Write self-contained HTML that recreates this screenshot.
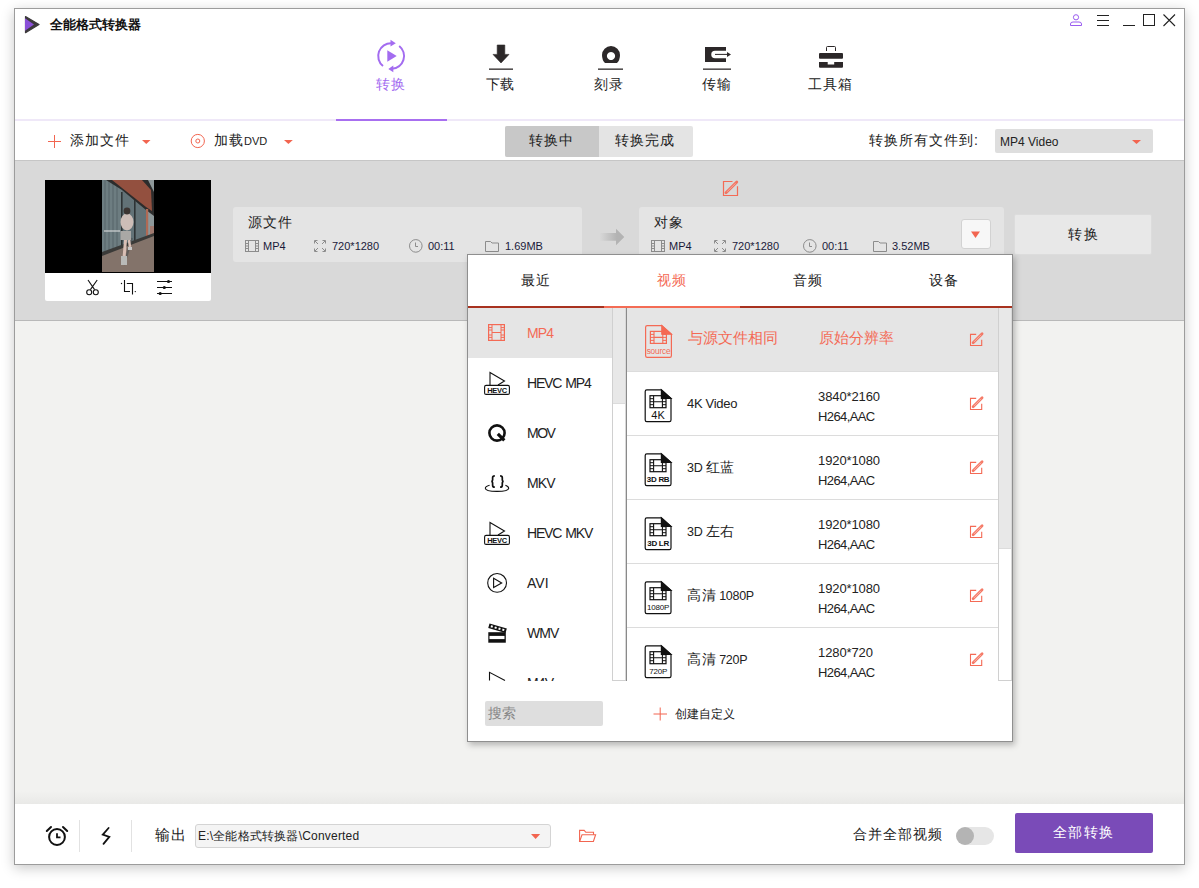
<!DOCTYPE html>
<html><head><meta charset="utf-8">
<style>
*{box-sizing:border-box;margin:0;padding:0}
html,body{width:1199px;height:888px;overflow:hidden;background:#fff;font-family:"Liberation Sans",sans-serif;color:#222}
.a{position:absolute}
#win{position:absolute;left:14px;top:8px;width:1171px;height:857px;border:1px solid #9c9c9c;background:#fff;box-shadow:0 3px 12px rgba(0,0,0,0.22);overflow:hidden}
.t{position:absolute;white-space:nowrap;line-height:1}
</style></head><body>
<div id="win"></div>
<!-- header -->
<div class="a" style="left:15px;top:9px;width:1169px;height:111px;background:#fff"></div>
<div class="a" style="left:15px;top:119px;width:1169px;height:2px;background:#efe8f8"></div>
<div class="a" style="left:336px;top:119px;width:111px;height:2px;background:#a86ff0"></div>

<!-- logo -->
<svg class="a" style="left:0;top:0" width="1199" height="120">
<polygon points="25.5,16.5 39,24.6 25.5,32.7" fill="#3d3a3c" stroke="#3d3a3c" stroke-width="1.2" stroke-linejoin="round"/>
<polygon points="25,18.3 34,24.6 25,30.8" fill="#8a50d8"/>
<!-- window controls -->
<circle cx="1076" cy="17.3" r="2.6" fill="none" stroke="#9a5cf0" stroke-width="1"/>
<path d="M1070.5 25.5 V24 Q1070.5 22 1073 22 H1079 Q1081.5 22 1081.5 24 V25.5 Z" fill="none" stroke="#9a5cf0" stroke-width="1"/>
<path d="M1097 15.5 H1109 M1097 20.5 H1109 M1097 25.5 H1109" stroke="#222" stroke-width="1"/>
<path d="M1123 25.5 H1135" stroke="#222" stroke-width="1"/>
<rect x="1143.5" y="14.5" width="11" height="11" fill="none" stroke="#222" stroke-width="1"/>
<path d="M1163.5 14.5 L1175 26 M1175 14.5 L1163.5 26" stroke="#222" stroke-width="1.1"/>
<!-- nav: convert -->
<g fill="none" stroke="#a36cf0" stroke-width="2">
<path d="M383 66 A12.8 12.8 0 0 1 391.5 43.2"/>
<path d="M399.2 46 A12.8 12.8 0 0 1 392 68.8"/>
</g>
<path d="M390.5 39.8 L395.8 43.2 L390.5 46.6 Z" fill="#a36cf0"/>
<path d="M393.3 65.5 L388.3 68.9 L393.3 72.3 Z" fill="#a36cf0"/>
<path d="M387.3 50.3 L396.7 56 L387.3 61.7 Z" fill="#a36cf0"/>
<!-- nav: download -->
<path d="M497.2 45 H504.8 V54.4 H509 L501 63 L493 54.4 H497.2 Z" fill="#2c2829" stroke="#2c2829" stroke-width="0.6" stroke-linejoin="round"/>
<rect x="489" y="68.5" width="24" height="1.3" fill="#2c2829"/>
<!-- nav: burn -->
<path d="M602 55 A9 9 0 0 1 620 55 Q620 60 617 63 H605 Q602 60 602 55 Z M611 51.9 A4.1 4.1 0 1 0 611.01 51.9 Z" fill="#2c2829" fill-rule="evenodd"/>
<rect x="598" y="68.5" width="25" height="1.3" fill="#2c2829"/>
<!-- nav: transfer -->
<path d="M705 47 H726 V50.8 H715 A3.75 3.75 0 0 0 715 58.3 H726 V62 H705 Z" fill="#2c2829"/>
<path d="M715 54.4 H728" stroke="#2c2829" stroke-width="1"/>
<path d="M727 52 L731 54.4 L727 57 Z" fill="#2c2829"/>
<rect x="703" y="68.5" width="28" height="1.3" fill="#2c2829"/>
<!-- nav: toolbox -->
<path d="M826.5 51 V47.5 Q826.5 46.5 827.5 46.5 H834.5 Q835.5 46.5 835.5 47.5 V51" fill="none" stroke="#2c2829" stroke-width="1"/>
<rect x="819" y="53" width="24" height="5.8" rx="1" fill="#2c2829"/>
<path d="M819 62 H827.7 V64.4 H834.2 V62 H843 V66.7 Q843 67.7 842 67.7 H820 Q819 67.7 819 66.7 Z" fill="#2c2829"/>
</svg>
<div class="t" style="left:50px;top:18px;font-size:13px;font-weight:bold;color:#111">全能格式转换器</div>
<div class="t" style="left:376px;top:77px;font-size:14px;color:#a36cf0;letter-spacing:0.5px">转换</div>
<div class="t" style="left:486px;top:77px;font-size:14px;color:#222">下载</div>
<div class="t" style="left:594px;top:77px;font-size:14px;color:#222;letter-spacing:1px">刻录</div>
<div class="t" style="left:702px;top:77px;font-size:14px;color:#222;letter-spacing:1px">传输</div>
<div class="t" style="left:808px;top:77px;font-size:14px;color:#222;letter-spacing:1px">工具箱</div>
<!-- toolbar -->
<svg class="a" style="left:0;top:120px" width="1199" height="40">
<path d="M48 21.5 H61 M54.5 15 V28" stroke="#f26550" stroke-width="1"/>
<path d="M142 20 H150.5 L146.25 24 Z" fill="#f26550"/>
<circle cx="197.8" cy="21" r="6.6" fill="none" stroke="#f26550" stroke-width="1"/>
<circle cx="197.8" cy="21" r="2" fill="none" stroke="#f26550" stroke-width="1"/>
<path d="M284 20 H292.8 L288.4 24 Z" fill="#f26550"/>
<path d="M1132 20 H1141 L1136.5 24 Z" fill="#f26550"/>
</svg>
<div class="t" style="left:70px;top:133px;font-size:14px;color:#222;letter-spacing:1px">添加文件</div>
<div class="t" style="left:214px;top:133px;font-size:14px;color:#222;letter-spacing:1px">加载<span style="font-size:11px;letter-spacing:0">DVD</span></div>
<div class="a" style="left:505px;top:126px;width:188px;height:31px;border-radius:2px;background:#e4e4e4;overflow:hidden"><div class="a" style="left:0;top:0;width:94px;height:31px;background:#c8c8c8"></div></div>
<div class="t" style="left:529px;top:133px;font-size:14px;color:#222;letter-spacing:1.2px">转换中</div>
<div class="t" style="left:615px;top:133px;font-size:14px;color:#222;letter-spacing:1px">转换完成</div>
<div class="t" style="left:869px;top:133px;font-size:14px;color:#222;letter-spacing:1px">转换所有文件到<span style="letter-spacing:0">:</span></div>
<div class="a" style="left:995px;top:129px;width:158px;height:24px;border-radius:2px;background:#dedede"></div>
<div class="t" style="left:1000px;top:136px;font-size:12px;color:#222">MP4 Video</div>
<svg class="a" style="left:0;top:120px" width="1199" height="40"><path d="M1132 20 H1141 L1136.5 24 Z" fill="#f26550"/></svg>

<div class="a" style="left:15px;top:160px;width:1169px;height:1px;background:#c6c6c6"></div>
<!-- file area -->
<div class="a" style="left:15px;top:161px;width:1169px;height:159px;background:#d9d9d9"></div>
<div class="a" style="left:15px;top:320px;width:1169px;height:1px;background:#b9b9b9"></div>

<!-- thumbnail -->
<div class="a" style="left:45px;top:180px;width:166px;height:121px;background:#fff;border-radius:0 0 2px 2px"></div>
<div class="a" style="left:45px;top:180px;width:166px;height:93px;background:#000"></div>
<svg class="a" style="left:102px;top:180px" width="52" height="92" viewBox="0 0 52 92">
<rect width="52" height="92" fill="#627277"/>
<rect x="0" y="0" width="20" height="80" fill="#6d7d81"/>
<path d="M3 0 V78 M7 0 V77 M11 0 V76 M15 0 V75" stroke="#566468" stroke-width="1"/>
<rect x="45" y="0" width="7" height="60" fill="#8d9799"/>
<polygon points="4,0 46,0 52,12 52,36 44,30 20,10" fill="#2c2c2c"/>
<polygon points="10,0 40,0 49,10 50,31 44,27" fill="#93503f"/>
<rect x="19" y="12" width="1.6" height="66" fill="#2e3436"/>
<rect x="32" y="20" width="1.6" height="56" fill="#2e3436"/>
<rect x="44" y="29" width="2.2" height="30" fill="#b06a55"/>
<rect x="48" y="46" width="4" height="10" fill="#a07a70"/>
<polygon points="0,74 52,55 52,92 0,92" fill="#83736a"/>
<polygon points="0,72 52,53 52,56 0,76" fill="#3a3a38"/>
<path d="M30 58 L22 85" stroke="#4a4e50" stroke-width="2" opacity="0.6"/>
<ellipse cx="25" cy="42" rx="6.5" ry="8.5" fill="#cdbdb7"/>
<circle cx="25" cy="31" r="3.4" fill="#3c3532"/>
<rect x="18.5" y="51" width="10.5" height="9" fill="#a9a8a5"/>
<path d="M23.5 60 L22 78" stroke="#d9bfb5" stroke-width="3"/>
<path d="M27 60 L28 67" stroke="#d9bfb5" stroke-width="2.5"/>
<rect x="19" y="76" width="6" height="9" fill="#b9bab8"/>
<rect x="26" y="67" width="4" height="3" fill="#c8c8c8"/>
<rect x="2" y="50" width="16" height="2" fill="#e8e8e8" opacity="0.5"/>
</svg>
<svg class="a" style="left:0;top:270px" width="220" height="40">
<g fill="none" stroke="#111" stroke-width="1.1">
<path d="M88 10 L94.6 19.6 M97.2 10 L90.4 19.6"/>
<circle cx="89.2" cy="22.2" r="2.5"/><circle cx="95.8" cy="22.2" r="2.5"/>
<path d="M124.5 10 V21.5 H130 M126.8 13.5 H132.5 V24.5"/>
<path d="M157 11.5 H172 M157 17.5 H172 M157 23.5 H172"/>
</g>
<g fill="#111"><circle cx="121.5" cy="13.5" r="0.7"/><circle cx="135.3" cy="21.6" r="0.7"/>
<circle cx="168.5" cy="11.5" r="1.6"/><circle cx="164.3" cy="17.5" r="1.6"/><circle cx="160.2" cy="23.5" r="1.6"/></g>
</svg>
<!-- source card -->
<div class="a" style="left:233px;top:207px;width:349px;height:55px;background:#e4e4e4;border-radius:3px"></div>
<div class="t" style="left:248px;top:215px;font-size:14px;color:#222;letter-spacing:1px">源文件</div>
<!-- target card -->
<div class="a" style="left:639px;top:207px;width:365px;height:55px;background:#e4e4e4;border-radius:3px"></div>
<div class="t" style="left:654px;top:215px;font-size:14px;color:#222;letter-spacing:1px">对象</div>
<div class="a" style="left:961px;top:219px;width:30px;height:30px;background:#f7f7f7;border:1px solid #d2d2d2;border-radius:3px"></div>
<div class="a" style="left:1014px;top:214px;width:138px;height:41px;background:#e8e8e8;border:1px solid #dcdcdc;border-radius:2px"></div>
<div class="t" style="left:1068px;top:227px;font-size:14px;color:#222;letter-spacing:1.5px">转换</div>
<svg class="a" style="left:0;top:170px" width="1199" height="100">
<path d="M971 61.6 H980 L975.5 67.9 Z" fill="#f26550"/>
<path d="M732.5 11.5 H723.5 V25.5 H737.5 V16.3" fill="none" stroke="#f46a55" stroke-width="1.2"/>
<path d="M726 22.8 L736.8 12" stroke="#f46a55" stroke-width="2.8" stroke-linecap="round" opacity="0.9"/><path d="M727 21.8 L735.5 13.3" stroke="#fff" stroke-width="0.7" opacity="0.55"/>
<!-- arrow -->
<defs><linearGradient id="ag" x1="0" x2="1"><stop offset="0" stop-color="#b3b3b3" stop-opacity="0"/><stop offset="0.7" stop-color="#b3b3b3"/></linearGradient></defs><path d="M599.5 63.1 H616 V58.7 L624.3 67 L616 75.2 V70.8 H599.5 Z" fill="url(#ag)"/>
<!-- info icons src -->
<g fill="none" stroke="#8c8c8c" stroke-width="1">
<rect x="245.5" y="70.5" width="13" height="11"/><path d="M248.5 70.5 V81.5 M255.5 70.5 V81.5 M245.5 73.5 H248.5 M245.5 76 H248.5 M245.5 78.5 H248.5 M255.5 73.5 H258.5 M255.5 76 H258.5 M255.5 78.5 H258.5"/>
<path d="M314.5 73.5 V70.5 H317.5 M322.5 70.5 H325.5 V73.5 M325.5 78.5 V81.5 H322.5 M317.5 81.5 H314.5 V78.5 M315 71 L318 74 M325 71 L322 74 M325 81 L322 78 M315 81 L318 78"/>
<circle cx="415.8" cy="75.9" r="6.3"/><path d="M415.5 72.5 V76.5 H418"/>
<path d="M485.5 81.5 V71.5 H490.5 L492 73 H498.5 V81.5 Z"/>
<rect x="651.5" y="70.5" width="13" height="11"/><path d="M654.5 70.5 V81.5 M661.5 70.5 V81.5 M651.5 73.5 H654.5 M651.5 76 H654.5 M651.5 78.5 H654.5 M661.5 73.5 H664.5 M661.5 76 H664.5 M661.5 78.5 H664.5"/>
<path d="M714.5 73.5 V70.5 H717.5 M722.5 70.5 H725.5 V73.5 M725.5 78.5 V81.5 H722.5 M717.5 81.5 H714.5 V78.5 M715 71 L718 74 M725 71 L722 74 M725 81 L722 78 M715 81 L718 78"/>
<circle cx="809.8" cy="75.9" r="6.3"/><path d="M809.5 72.5 V76.5 H812"/>
<path d="M873.5 81.5 V71.5 H878.5 L880 73 H886.5 V81.5 Z"/>
</g>
</svg>
<div class="t" style="left:263px;top:241px;font-size:11px;color:#1a1a3a">MP4</div>
<div class="t" style="left:332px;top:241px;font-size:11px;color:#1a1a3a">720*1280</div>
<div class="t" style="left:428px;top:241px;font-size:11px;color:#1a1a3a">00:11</div>
<div class="t" style="left:505px;top:241px;font-size:11px;color:#1a1a3a">1.69MB</div>
<div class="t" style="left:669px;top:241px;font-size:11px;color:#1a1a3a">MP4</div>
<div class="t" style="left:732px;top:241px;font-size:11px;color:#1a1a3a">720*1280</div>
<div class="t" style="left:822px;top:241px;font-size:11px;color:#1a1a3a">00:11</div>
<div class="t" style="left:892px;top:241px;font-size:11px;color:#1a1a3a">3.52MB</div>
<!-- main area -->
<div class="a" style="left:15px;top:321px;width:1169px;height:483px;background:linear-gradient(#f2f2f0 0,#f2f2f0 470px,#e9e9e7 483px)"></div>
<!-- footer -->
<div class="a" style="left:15px;top:804px;width:1169px;height:60px;background:#fff"></div>


<!-- footer content -->
<svg class="a" style="left:0;top:800px" width="1199" height="70">
<g fill="none" stroke="#111" stroke-width="2" stroke-linecap="round">
<circle cx="57" cy="37" r="7.9"/>
<path d="M46.8 31 L51 27 M67.2 31 L63 27"/>
<path d="M57 33.2 V37.3 H60.5" stroke-width="1.8" stroke-linecap="butt"/>
<path d="M108.6 28 L102.8 34.6 L109.3 36.9 L103.5 43.8" stroke-width="1.8" stroke-linejoin="miter"/>
</g>
<rect x="79" y="20" width="1" height="32" fill="#e2e2e2"/>
<rect x="131" y="20" width="1" height="32" fill="#e2e2e2"/>
<path d="M531 34 H540.2 L535.6 39 Z" fill="#f26550"/>
<g fill="none" stroke="#f26550" stroke-width="1.1">
<path d="M579.6 41.5 V30.4 H584.2 L585.8 32.3 H593.5 V34.7"/>
<path d="M579.6 41.5 L582 34.7 H595.6 L593.4 41.5 Z"/>
</g>
</svg>
<div class="t" style="left:155px;top:828px;font-size:14.5px;color:#222;letter-spacing:1.2px">输出</div>
<div class="a" style="left:195px;top:824px;width:356px;height:24px;background:#f4f4f4;border:1px solid #d4d4d4;border-radius:3px"></div>
<div class="t" style="left:198px;top:830px;font-size:12px;color:#222;letter-spacing:0.2px">E:\全能格式转换器\Converted</div>
<svg class="a" style="left:0;top:800px" width="1199" height="70"><path d="M531 34 H540.2 L535.6 39 Z" fill="#f26550"/></svg>
<div class="t" style="left:853px;top:827px;font-size:14px;color:#222;letter-spacing:1px">合并全部视频</div>
<div class="a" style="left:957px;top:827px;width:37px;height:18px;background:#e6e6e6;border-radius:9px"></div>
<div class="a" style="left:956px;top:827px;width:18px;height:18px;background:#b4b4b4;border-radius:50%"></div>
<div class="a" style="left:1015px;top:813px;width:138px;height:40px;background:#7a4bb8;border-radius:2px"></div>
<div class="t" style="left:1053px;top:825px;font-size:14px;color:#fff;letter-spacing:1.3px">全部转换</div>
<!-- popup -->
<div class="a" style="left:467px;top:254px;width:546px;height:488px;background:#fff;border:1px solid #8f8f8f;box-shadow:2px 3px 6px rgba(0,0,0,0.25)"></div>
<div class="t" style="left:521px;top:273px;letter-spacing:1px;font-size:14px;color:#222">最近</div>
<div class="t" style="left:657px;top:273px;letter-spacing:1px;font-size:14px;color:#f46a55">视频</div>
<div class="t" style="left:793px;top:273px;letter-spacing:1px;font-size:14px;color:#222">音频</div>
<div class="t" style="left:929px;top:273px;letter-spacing:1px;font-size:14px;color:#222">设备</div>
<div class="a" style="left:468px;top:306px;width:544px;height:2px;background:#a8321f"></div>
<div class="a" style="left:604px;top:306px;width:136px;height:2px;background:#f46c55"></div>
<!-- left list -->
<div class="a" style="left:468px;top:308px;width:144px;height:50px;background:#e5e5e5"></div>
<div class="a" style="left:612px;top:308px;width:1px;height:373px;background:#d0d0d0"></div>
<div class="a" style="left:613px;top:308px;width:12px;height:95px;background:#e8e8e8"></div>
<div class="a" style="left:625px;top:308px;width:1px;height:372px;background:#d8d8d8"></div>
<div class="a" style="left:613px;top:403px;width:12px;height:1px;background:#dcdcdc"></div>
<div class="a" style="left:612px;top:680px;width:14px;height:1px;background:#d0d0d0"></div>
<div class="a" style="left:626px;top:308px;width:1px;height:373px;background:#8a8a8a"></div>
<!-- right list -->
<div class="a" style="left:627px;top:308px;width:371px;height:63px;background:#e5e5e5"></div>
<div class="a" style="left:627px;top:371px;width:371px;height:1px;background:#dcdcdc"></div>
<div class="a" style="left:627px;top:435px;width:371px;height:1px;background:#dcdcdc"></div>
<div class="a" style="left:627px;top:499px;width:371px;height:1px;background:#dcdcdc"></div>
<div class="a" style="left:627px;top:563px;width:371px;height:1px;background:#dcdcdc"></div>
<div class="a" style="left:627px;top:627px;width:371px;height:1px;background:#dcdcdc"></div>
<div class="a" style="left:998px;top:308px;width:1px;height:373px;background:#d0d0d0"></div>
<div class="a" style="left:999px;top:308px;width:12px;height:240px;background:#e8e8e8"></div>
<div class="a" style="left:999px;top:548px;width:12px;height:1px;background:#dcdcdc"></div>
<div class="a" style="left:1011px;top:308px;width:1px;height:372px;background:#d8d8d8"></div>
<div class="a" style="left:998px;top:680px;width:14px;height:1px;background:#d0d0d0"></div>
<div class="t" style="left:688px;top:330px;font-size:15px;color:#f46a55">与源文件相同</div>
<div class="t" style="left:819px;top:331px;font-size:14.5px;color:#f46a55">原始分辨率</div>
<div class="t" style="left:687px;top:397px;font-size:13px;color:#222;letter-spacing:-0.3px">4K Video</div>
<div class="t" style="left:818px;top:390px;font-size:13px;color:#222;letter-spacing:-0.1px">3840*2160</div>
<div class="t" style="left:818px;top:410px;font-size:13px;color:#222;letter-spacing:-0.6px">H264,AAC</div>
<div class="t" style="left:687px;top:460px;font-size:12.5px;color:#222;letter-spacing:-0.3px">3D <span style="font-size:14px;letter-spacing:0.5px">红蓝</span></div>
<div class="t" style="left:818px;top:454px;font-size:13px;color:#222;letter-spacing:-0.1px">1920*1080</div>
<div class="t" style="left:818px;top:474px;font-size:13px;color:#222;letter-spacing:-0.6px">H264,AAC</div>
<div class="t" style="left:687px;top:524px;font-size:12.5px;color:#222;letter-spacing:-0.3px">3D <span style="font-size:14px;letter-spacing:0.5px">左右</span></div>
<div class="t" style="left:818px;top:518px;font-size:13px;color:#222;letter-spacing:-0.1px">1920*1080</div>
<div class="t" style="left:818px;top:538px;font-size:13px;color:#222;letter-spacing:-0.6px">H264,AAC</div>
<div class="t" style="left:687px;top:588px;font-size:12.5px;color:#222;letter-spacing:-0.3px"><span style="font-size:14px;letter-spacing:0.5px">高清</span> 1080P</div>
<div class="t" style="left:818px;top:582px;font-size:13px;color:#222;letter-spacing:-0.1px">1920*1080</div>
<div class="t" style="left:818px;top:602px;font-size:13px;color:#222;letter-spacing:-0.6px">H264,AAC</div>
<div class="t" style="left:687px;top:652px;font-size:12.5px;color:#222;letter-spacing:-0.3px"><span style="font-size:14px;letter-spacing:0.5px">高清</span> 720P</div>
<div class="t" style="left:818px;top:646px;font-size:13px;color:#222;letter-spacing:-0.1px">1280*720</div>
<div class="t" style="left:818px;top:666px;font-size:13px;color:#222;letter-spacing:-0.6px">H264,AAC</div>
<div class="t" style="left:527px;top:326px;font-size:14px;color:#f46a55;letter-spacing:-0.9px">MP4</div>
<div class="t" style="left:527px;top:376px;font-size:14px;color:#222;letter-spacing:-1.2px;word-spacing:1.5px">HEVC MP4</div>
<div class="t" style="left:527px;top:426px;font-size:14px;color:#222;letter-spacing:-1.5px">MOV</div>
<div class="t" style="left:527px;top:476px;font-size:14px;color:#222;letter-spacing:-0.9px">MKV</div>
<div class="t" style="left:527px;top:526px;font-size:14px;color:#222;letter-spacing:-1.2px;word-spacing:1.5px">HEVC MKV</div>
<div class="t" style="left:527px;top:576px;font-size:14px;color:#222;letter-spacing:0px">AVI</div>
<div class="t" style="left:527px;top:626px;font-size:14px;color:#222;letter-spacing:-0.9px">WMV</div>
<div class="t" style="left:527px;top:676px;font-size:14px;color:#222;letter-spacing:-0.9px">M4V</div>
<svg class="a" style="left:0;top:0" width="1199" height="888">
<g fill="none" stroke="#f46a55" stroke-width="1.2">
<rect x="488.6" y="324.6" width="15.8" height="15.8"/>
<path d="M492 324.6 V340.4 M501 324.6 V340.4 M492 332.5 H501 M488.6 327.6 H492 M488.6 330 H492 M488.6 335 H492 M488.6 337.4 H492 M501 327.6 H504.4 M501 330 H504.4 M501 335 H504.4 M501 337.4 H504.4" stroke-width="1"/>
</g>
<g fill="none" stroke="#111" stroke-width="1.1">
<path d="M490 385 V372.5 L504.5 381 L498 385"/>
<rect x="484.6" y="385.4" width="24.8" height="9" rx="1.5"/>
<path d="M490 535 V522.5 L504.5 531 L498 535"/>
<rect x="484.6" y="535.4" width="24.8" height="9" rx="1.5"/>
<circle cx="497" cy="433" r="7.6" stroke-width="2.6"/>
<path d="M497.8 433.8 L504.3 440.3" stroke-width="3.2"/>
<path d="M489.6 485.2 Q485.3 486.4 485.3 488.3 Q485.3 491.4 497 491.4 Q508.7 491.4 508.7 488.3 Q508.7 486.4 505.4 485.2"/>
<circle cx="497.1" cy="582.9" r="9.4"/>
<path d="M493.6 578.3 L501.7 582.9 L493.6 587.6 Z"/>
<path d="M489.5 680.5 V672.3 L505 680.5"/>
</g>
<text x="497" y="393" text-anchor="middle" font-family="Liberation Sans" font-weight="bold" font-size="7.5" fill="#111" letter-spacing="-0.3">HEVC</text>
<text x="497" y="543" text-anchor="middle" font-family="Liberation Sans" font-weight="bold" font-size="7.5" fill="#111" letter-spacing="-0.3">HEVC</text>
<path d="M494.8 475.8 Q492.6 475.8 492.6 477.8 V480 Q492.6 481.4 491.2 481.4 Q492.6 481.4 492.6 482.8 V485.2 Q492.6 487.2 494.8 487.2 M500.1 475.8 Q502.3 475.8 502.3 477.8 V480 Q502.3 481.4 503.7 481.4 Q502.3 481.4 502.3 482.8 V485.2 Q502.3 487.2 500.1 487.2" fill="none" stroke="#111" stroke-width="1.7"/>
<rect x="488.3" y="632.2" width="17.5" height="10.5" fill="#111"/>
<rect x="489.5" y="635.9" width="15" height="3.2" fill="#fff"/>
<g transform="translate(489.5,623.6) rotate(16)"><rect x="0" y="0" width="18" height="4.5" fill="#111"/>
<rect x="2" y="1.2" width="2" height="2" fill="#fff"/><rect x="6" y="1.2" width="2" height="2" fill="#fff"/><rect x="10" y="1.2" width="2" height="2" fill="#fff"/><rect x="14" y="1.2" width="2" height="2" fill="#fff"/></g>
</svg>
<svg class="a" style="left:0;top:0" width="1199" height="888"><g transform="translate(645,325)" fill="none" stroke="#f46a55" stroke-width="1.2">
<path d="M16.8 0.6 H2.2 Q0.6 0.6 0.6 2.2 V30.8 Q0.6 32.4 2.2 32.4 H24.8 Q26.4 32.4 26.4 30.8 V9.2 Z"/>
<path d="M16.8 0.6 L26.4 9.2 H16.8 Z" fill="#f46a55"/>
<rect x="5.4" y="6.4" width="16" height="12" stroke-width="1.2"/>
<path d="M9 6.4 V18.4 M17.8 6.4 V18.4 M9 12.4 H17.8" stroke-width="1.1"/>
<path d="M5.4 9.4 H9 M5.4 12.4 H9 M5.4 15.4 H9 M17.8 9.4 H21.4 M17.8 12.4 H21.4 M17.8 15.4 H21.4" stroke-width="1"/>
<text x="13.5" y="29.3" text-anchor="middle" font-family="Liberation Sans" font-size="8.3" fill="#f46a55" stroke="none" font-weight="normal" letter-spacing="-0.2">source</text>
</g><g transform="translate(976.5,339.5)" fill="none" stroke="#f46a55"><path d="M-0.3 -5.1 H-6 V6 H5.2 V0.2" stroke-width="1.1"/>
<path d="M-3.4 3.3 L5.6 -5.7" stroke-width="2.7" stroke-linecap="round" opacity="0.9"/><path d="M-2.6 2.5 L4.6 -4.7" stroke="#fff" stroke-width="0.7" opacity="0.6"/></g><g transform="translate(644.6,389.3)" fill="none" stroke="#111" stroke-width="1.2">
<path d="M16.8 0.6 H2.2 Q0.6 0.6 0.6 2.2 V30.8 Q0.6 32.4 2.2 32.4 H24.8 Q26.4 32.4 26.4 30.8 V9.2 Z"/>
<path d="M16.8 0.6 L26.4 9.2 H16.8 Z" fill="#111"/>
<rect x="5.4" y="6.4" width="16" height="12" stroke-width="1.2"/>
<path d="M9 6.4 V18.4 M17.8 6.4 V18.4 M9 12.4 H17.8" stroke-width="1.1"/>
<path d="M5.4 9.4 H9 M5.4 12.4 H9 M5.4 15.4 H9 M17.8 9.4 H21.4 M17.8 12.4 H21.4 M17.8 15.4 H21.4" stroke-width="1"/>
<text x="13.5" y="29.3" text-anchor="middle" font-family="Liberation Sans" font-size="11" fill="#111" stroke="none" font-weight="normal" letter-spacing="0">4K</text>
</g><g transform="translate(976.5,403.5)" fill="none" stroke="#f46a55"><path d="M-0.3 -5.1 H-6 V6 H5.2 V0.2" stroke-width="1.1"/>
<path d="M-3.4 3.3 L5.6 -5.7" stroke-width="2.7" stroke-linecap="round" opacity="0.9"/><path d="M-2.6 2.5 L4.6 -4.7" stroke="#fff" stroke-width="0.7" opacity="0.6"/></g><g transform="translate(644.6,453.3)" fill="none" stroke="#111" stroke-width="1.2">
<path d="M16.8 0.6 H2.2 Q0.6 0.6 0.6 2.2 V30.8 Q0.6 32.4 2.2 32.4 H24.8 Q26.4 32.4 26.4 30.8 V9.2 Z"/>
<path d="M16.8 0.6 L26.4 9.2 H16.8 Z" fill="#111"/>
<rect x="5.4" y="6.4" width="16" height="12" stroke-width="1.2"/>
<path d="M9 6.4 V18.4 M17.8 6.4 V18.4 M9 12.4 H17.8" stroke-width="1.1"/>
<path d="M5.4 9.4 H9 M5.4 12.4 H9 M5.4 15.4 H9 M17.8 9.4 H21.4 M17.8 12.4 H21.4 M17.8 15.4 H21.4" stroke-width="1"/>
<text x="13.5" y="28.5" text-anchor="middle" font-family="Liberation Sans" font-size="8" fill="#111" stroke="none" font-weight="bold" letter-spacing="-0.3">3D RB</text>
</g><g transform="translate(976.5,467.5)" fill="none" stroke="#f46a55"><path d="M-0.3 -5.1 H-6 V6 H5.2 V0.2" stroke-width="1.1"/>
<path d="M-3.4 3.3 L5.6 -5.7" stroke-width="2.7" stroke-linecap="round" opacity="0.9"/><path d="M-2.6 2.5 L4.6 -4.7" stroke="#fff" stroke-width="0.7" opacity="0.6"/></g><g transform="translate(644.6,517.3)" fill="none" stroke="#111" stroke-width="1.2">
<path d="M16.8 0.6 H2.2 Q0.6 0.6 0.6 2.2 V30.8 Q0.6 32.4 2.2 32.4 H24.8 Q26.4 32.4 26.4 30.8 V9.2 Z"/>
<path d="M16.8 0.6 L26.4 9.2 H16.8 Z" fill="#111"/>
<rect x="5.4" y="6.4" width="16" height="12" stroke-width="1.2"/>
<path d="M9 6.4 V18.4 M17.8 6.4 V18.4 M9 12.4 H17.8" stroke-width="1.1"/>
<path d="M5.4 9.4 H9 M5.4 12.4 H9 M5.4 15.4 H9 M17.8 9.4 H21.4 M17.8 12.4 H21.4 M17.8 15.4 H21.4" stroke-width="1"/>
<text x="13.5" y="28.5" text-anchor="middle" font-family="Liberation Sans" font-size="8" fill="#111" stroke="none" font-weight="bold" letter-spacing="-0.3">3D LR</text>
</g><g transform="translate(976.5,531.5)" fill="none" stroke="#f46a55"><path d="M-0.3 -5.1 H-6 V6 H5.2 V0.2" stroke-width="1.1"/>
<path d="M-3.4 3.3 L5.6 -5.7" stroke-width="2.7" stroke-linecap="round" opacity="0.9"/><path d="M-2.6 2.5 L4.6 -4.7" stroke="#fff" stroke-width="0.7" opacity="0.6"/></g><g transform="translate(644.6,581.3)" fill="none" stroke="#111" stroke-width="1.2">
<path d="M16.8 0.6 H2.2 Q0.6 0.6 0.6 2.2 V30.8 Q0.6 32.4 2.2 32.4 H24.8 Q26.4 32.4 26.4 30.8 V9.2 Z"/>
<path d="M16.8 0.6 L26.4 9.2 H16.8 Z" fill="#111"/>
<rect x="5.4" y="6.4" width="16" height="12" stroke-width="1.2"/>
<path d="M9 6.4 V18.4 M17.8 6.4 V18.4 M9 12.4 H17.8" stroke-width="1.1"/>
<path d="M5.4 9.4 H9 M5.4 12.4 H9 M5.4 15.4 H9 M17.8 9.4 H21.4 M17.8 12.4 H21.4 M17.8 15.4 H21.4" stroke-width="1"/>
<text x="13.5" y="28.7" text-anchor="middle" font-family="Liberation Sans" font-size="8" fill="#111" stroke="none" font-weight="normal" letter-spacing="-0.2">1080P</text>
</g><g transform="translate(976.5,595.5)" fill="none" stroke="#f46a55"><path d="M-0.3 -5.1 H-6 V6 H5.2 V0.2" stroke-width="1.1"/>
<path d="M-3.4 3.3 L5.6 -5.7" stroke-width="2.7" stroke-linecap="round" opacity="0.9"/><path d="M-2.6 2.5 L4.6 -4.7" stroke="#fff" stroke-width="0.7" opacity="0.6"/></g><g transform="translate(644.6,645.3)" fill="none" stroke="#111" stroke-width="1.2">
<path d="M16.8 0.6 H2.2 Q0.6 0.6 0.6 2.2 V30.8 Q0.6 32.4 2.2 32.4 H24.8 Q26.4 32.4 26.4 30.8 V9.2 Z"/>
<path d="M16.8 0.6 L26.4 9.2 H16.8 Z" fill="#111"/>
<rect x="5.4" y="6.4" width="16" height="12" stroke-width="1.2"/>
<path d="M9 6.4 V18.4 M17.8 6.4 V18.4 M9 12.4 H17.8" stroke-width="1.1"/>
<path d="M5.4 9.4 H9 M5.4 12.4 H9 M5.4 15.4 H9 M17.8 9.4 H21.4 M17.8 12.4 H21.4 M17.8 15.4 H21.4" stroke-width="1"/>
<text x="13.5" y="28.7" text-anchor="middle" font-family="Liberation Sans" font-size="8" fill="#111" stroke="none" font-weight="normal" letter-spacing="-0.2">720P</text>
</g><g transform="translate(976.5,659.5)" fill="none" stroke="#f46a55"><path d="M-0.3 -5.1 H-6 V6 H5.2 V0.2" stroke-width="1.1"/>
<path d="M-3.4 3.3 L5.6 -5.7" stroke-width="2.7" stroke-linecap="round" opacity="0.9"/><path d="M-2.6 2.5 L4.6 -4.7" stroke="#fff" stroke-width="0.7" opacity="0.6"/></g></svg><!-- popup bottom -->
<div class="a" style="left:468px;top:681px;width:544px;height:60px;background:#fff"></div>
<div class="a" style="left:485px;top:701px;width:118px;height:25px;background:#dedede;border-radius:2px"></div>
<div class="t" style="left:488px;top:706px;font-size:14px;color:#888">搜索</div>
<svg class="a" style="left:0;top:0" width="1199" height="888"><path d="M653.5 714 H667 M660.2 707.5 V720.5" stroke="#f26550" stroke-width="1"/></svg>
<div class="t" style="left:675px;top:708px;font-size:12px;color:#222">创建自定义</div>
</body></html>
